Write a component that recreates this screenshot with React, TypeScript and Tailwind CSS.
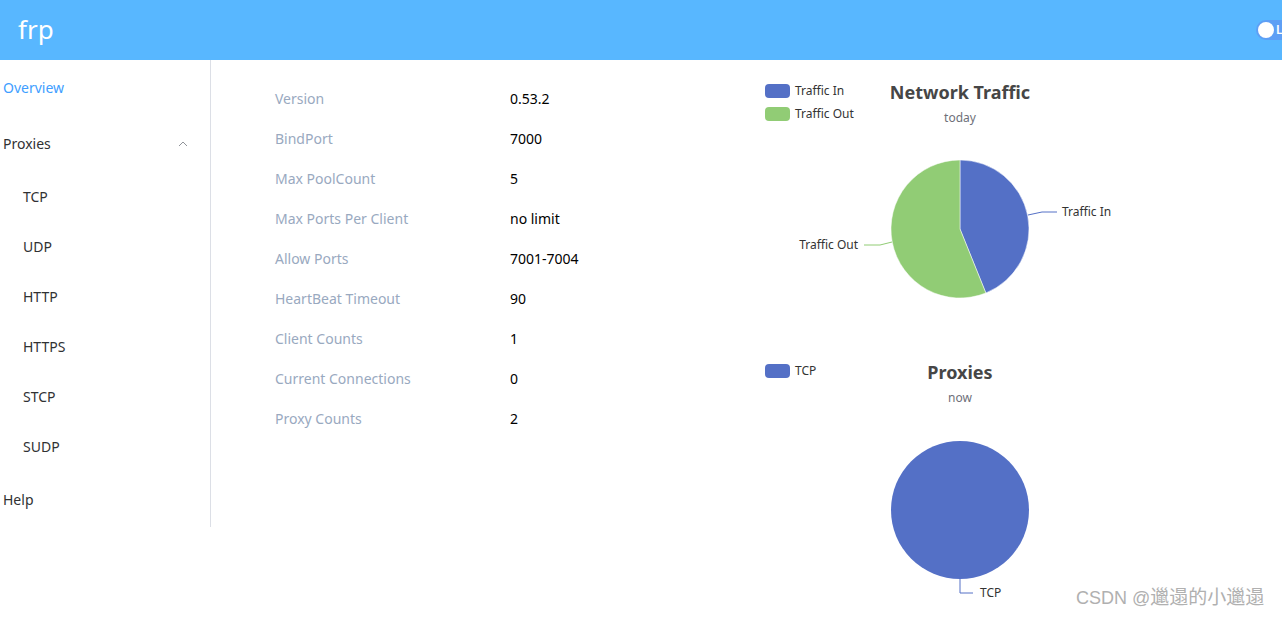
import React from "react";

const font = { fontFamily: '"Noto Sans", "Liberation Sans", sans-serif' };

const rows: [string, string][] = [
  ["Version", "0.53.2"],
  ["BindPort", "7000"],
  ["Max PoolCount", "5"],
  ["Max Ports Per Client", "no limit"],
  ["Allow Ports", "7001-7004"],
  ["HeartBeat Timeout", "90"],
  ["Client Counts", "1"],
  ["Current Connections", "0"],
  ["Proxy Counts", "2"],
];

const subItems = ["TCP", "UDP", "HTTP", "HTTPS", "STCP", "SUDP"];

function TrafficChart() {
  const cx = 210, cy = 159, r = 69;
  const ex = cx + 25.85, ey = cy + 63.97;
  return (
    <svg width="420" height="280" className="block">
      <rect x="15" y="14" width="25" height="14" rx="4" fill="#5470c6" />
      <text x="45" y="25" fontSize="12" fill="#333">Traffic In</text>
      <rect x="15" y="37" width="25" height="14" rx="4" fill="#91cc75" />
      <text x="45" y="48" fontSize="12" fill="#333">Traffic Out</text>
      <text x="210" y="29" fontSize="18" fontWeight="bold" fill="#464646" textAnchor="middle">Network Traffic</text>
      <text x="210" y="52" fontSize="12" fill="#6e7079" textAnchor="middle">today</text>
      <path d={`M${cx} ${cy} L${cx} ${cy - r} A${r} ${r} 0 0 1 ${ex} ${ey} Z`} fill="#5470c6" stroke="#fff" strokeWidth="0.5" />
      <path d={`M${cx} ${cy} L${ex} ${ey} A${r} ${r} 0 1 1 ${cx} ${cy - r} Z`} fill="#91cc75" stroke="#fff" strokeWidth="0.5" />
      <polyline points="278,145 292,142 307,142" fill="none" stroke="#5470c6" strokeWidth="1" />
      <text x="312" y="146" fontSize="12" fill="#333">Traffic In</text>
      <polyline points="142,172 130,175 114,175" fill="none" stroke="#91cc75" strokeWidth="1" />
      <text x="108" y="179" fontSize="12" fill="#333" textAnchor="end">Traffic Out</text>
    </svg>
  );
}

function ProxiesChart() {
  const cx = 210, cy = 160, r = 69;
  return (
    <svg width="420" height="268" className="block">
      <rect x="15" y="14" width="25" height="14" rx="4" fill="#5470c6" />
      <text x="45" y="25" fontSize="12" fill="#333">TCP</text>
      <text x="210" y="29" fontSize="18" fontWeight="bold" fill="#464646" textAnchor="middle">Proxies</text>
      <text x="210" y="52" fontSize="12" fill="#6e7079" textAnchor="middle">now</text>
      <circle cx={cx} cy={cy} r={r} fill="#5470c6" />
      <polyline points="210,229 210,243 223,243" fill="none" stroke="#5470c6" strokeWidth="1" />
      <text x="230" y="247" fontSize="12" fill="#333">TCP</text>
    </svg>
  );
}

export default function App() {
  return (
    <div className="relative w-[1282px] h-[618px] overflow-hidden bg-white" style={font}>
      <header className="h-[60px] bg-[#58b7ff] flex items-center justify-between overflow-hidden">
        <div className="pl-[18px] text-[26px] text-white leading-none pb-[3px]">frp</div>
        <div className="flex items-center h-[20px] w-[60px] -mr-[34px] rounded-full bg-[#5e9ff5] pl-[2px] gap-[2px]">
          <div className="w-[16px] h-[16px] rounded-full bg-white" />
          <span className="text-[12px] text-white leading-none font-semibold">Light</span>
        </div>
      </header>
      <div className="flex">
        <aside className="w-[211px] h-[467px] border-r border-[#dcdfe6] text-[14px] text-[#303133] flex flex-col">
          <div className="h-[56px] flex items-center pl-[3px] text-[#409eff]">Overview</div>
          <div className="h-[56px] flex items-center justify-between pl-[3px] pr-[22px]">
            <span>Proxies</span>
            <svg width="10" height="6" viewBox="0 0 10 6">
              <polyline points="1,5 5,1 9,5" fill="none" stroke="#909399" strokeWidth="1" />
            </svg>
          </div>
          {subItems.map((s) => (
            <div key={s} className="h-[50px] flex items-center pl-[23px]">{s}</div>
          ))}
          <div className="h-[56px] flex items-center pl-[3px]">Help</div>
        </aside>
        <main className="flex-1 flex">
          <div className="w-[539px] pl-[64px] pt-[18px] text-[14px]">
            {rows.map(([k, v]) => (
              <div key={k} className="h-[40px] flex items-center">
                <div className="w-[235px] text-[#99a9bf]">{k}</div>
                <div className="text-[#000]">{v}</div>
              </div>
            ))}
          </div>
          <div className="w-[420px] pt-[10px] flex flex-col">
            <TrafficChart />
            <ProxiesChart />
          </div>
        </main>
      </div>
      <div
        className="absolute left-[1076px] top-[588px] flex items-baseline text-[#b0b0b0] leading-none whitespace-nowrap"
        style={{ fontFamily: '"Liberation Sans", "Noto Sans CJK SC", sans-serif' }}
      >
        <span className="text-[18px]">CSDN @</span>
        <span className="text-[19px]">邋遢的小邋遢</span>
      </div>
    </div>
  );
}
